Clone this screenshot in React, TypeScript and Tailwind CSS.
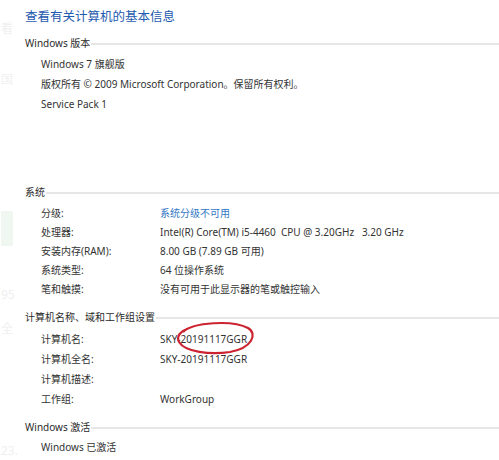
import React from 'react';

interface Row {
  label: string;
  value?: string;
  link?: boolean;
}

const systemRows: Row[] = [
  { label: '分级:', value: '系统分级不可用', link: true },
  { label: '处理器:', value: 'Intel(R) Core(TM) i5-4460  CPU @ 3.20GHz   3.20 GHz' },
  { label: '安装内存(RAM):', value: '8.00 GB (7.89 GB 可用)' },
  { label: '系统类型:', value: '64 位操作系统' },
  { label: '笔和触摸:', value: '没有可用于此显示器的笔或触控输入' },
];

const nameRows: Row[] = [
  { label: '计算机名:', value: 'SKY-20191117GGR' },
  { label: '计算机全名:', value: 'SKY-20191117GGR' },
  { label: '计算机描述:' },
  { label: '工作组:', value: 'WorkGroup' },
];

const SectionHeader = ({ title, className = '' }: { title: string; className?: string }) => (
  <div className={`flex items-center h-[20px] ${className}`}>
    <span className="text-[10px] text-[#2b2b2b] whitespace-nowrap pr-[1px]">{title}</span>
    <div className="flex-1 h-[2px] bg-[#e6e6e6] mt-[2px]" />
  </div>
);

const InfoRow = ({ row, h }: { row: Row; h: string }) => (
  <div className={`flex items-center ${h} pl-[16px] text-[10px]`}>
    <span className="w-[119px] text-[#333]">{row.label}</span>
    <span className={`whitespace-pre ${row.link ? 'text-[#3377c4]' : 'text-[#333]'}`}>{row.value}</span>
  </div>
);

export default function App() {
  return (
    <div
      className="relative w-[499px] h-[460px] overflow-hidden bg-white flex"
      style={{ fontFamily: '"Noto Sans", "Noto Sans CJK SC", sans-serif' }}
    >
      {/* cut off left pane */}
      <div className="w-[25px] shrink-0 flex flex-col text-[#efefef] text-[12px] pl-[1px]">
        <div className="h-[20px] mt-[20px]">看</div>
        <div className="h-[20px] mt-[32px]">国</div>
        <div className="mt-[120px] w-[12px] h-[36px] bg-[#f0f7f1]" />
        <div className="mt-[40px]">95</div>
        <div className="mt-[16px]">全</div>
        <div className="mt-[104px]">23.</div>
      </div>

      <div className="flex-1 flex flex-col">
        <div className="h-[20px] mt-[7px] flex items-center text-[12.5px] text-[#1e5aae]">查看有关计算机的基本信息</div>

        <SectionHeader title="Windows 版本" className="mt-[6px]" />
        <div className="flex flex-col pl-[16px] text-[10px] text-[#333] mt-[1px]">
          <div className="h-[20px] flex items-center">Windows 7 旗舰版</div>
          <div className="h-[20px] flex items-center">版权所有 © 2009 Microsoft Corporation。保留所有权利。</div>
          <div className="h-[20px] flex items-center">Service Pack 1</div>
        </div>

        <SectionHeader title="系统" className="mt-[68px]" />
        <div className="flex flex-col mt-[2px]">
          {systemRows.map((r) => (
            <InfoRow key={r.label} row={r} h="h-[19px]" />
          ))}
        </div>

        <SectionHeader title="计算机名称、域和工作组设置" className="mt-[8px]" />
        <div className="flex flex-col mt-[2px]">
          {nameRows.map((r) => (
            <InfoRow key={r.label} row={r} h="h-[20px]" />
          ))}
        </div>

        <SectionHeader title="Windows 激活" className="mt-[8px]" />
        <div className="h-[20px] flex items-center pl-[16px] text-[10px] text-[#333]">Windows 已激活</div>
      </div>

      {/* red annotation circle */}
      <svg className="absolute left-[175px] top-[320px]" width="84" height="36" viewBox="0 0 84 36">
        <path
          d="M8 12 C 18 2, 58 0, 73 8 C 83 14, 77 28, 55 32 C 35 35, 10 32, 4 22 C 1 16, 6 11, 12 9"
          fill="none"
          stroke="#cc2330"
          strokeWidth="2.2"
        />
      </svg>
    </div>
  );
}
